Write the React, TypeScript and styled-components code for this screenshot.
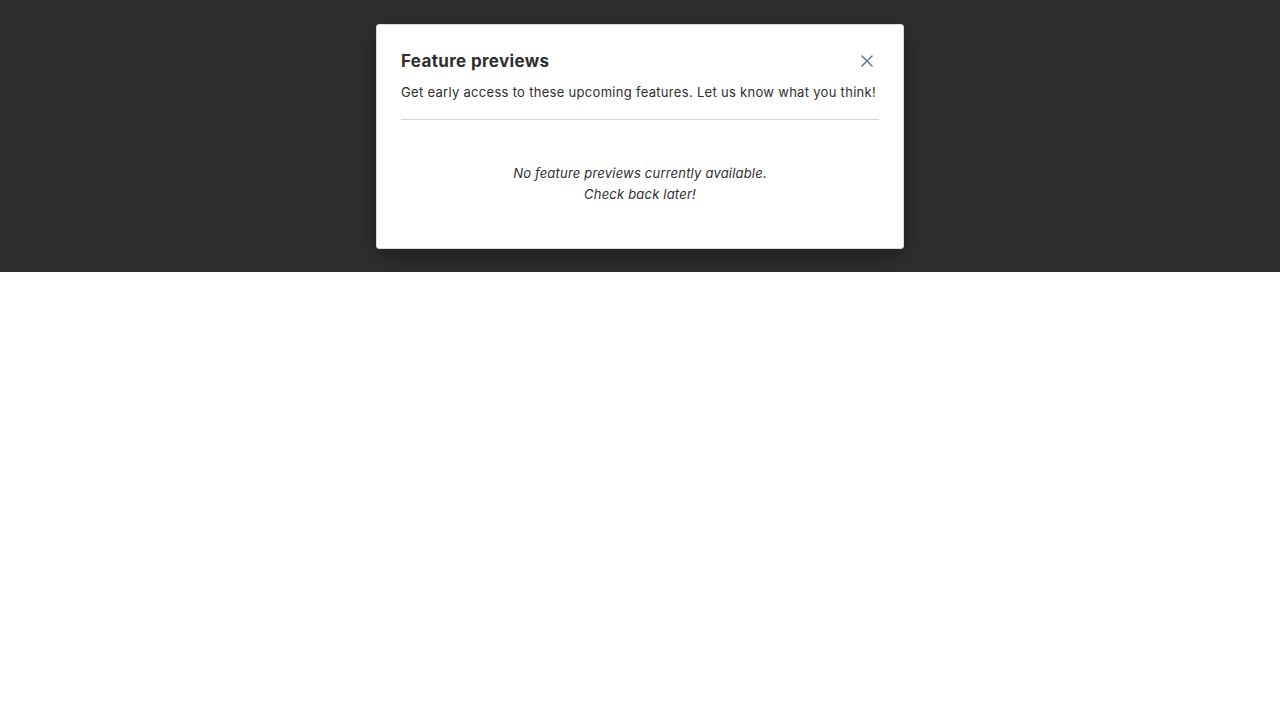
import React, { useState } from 'react';
import styled, { createGlobalStyle } from 'styled-components';

const GlobalStyle = createGlobalStyle`
  * { box-sizing: border-box; }
  body {
    margin: 0;
    background: #ffffff;
    font-family: Inter, "Noto Sans", "Liberation Sans", sans-serif;
    color: #2e2e2e;
  }
`;

const Backdrop = styled.div`
  height: 272px;
  background-color: #2e2e2e;
  display: flex;
  justify-content: center;
  align-items: flex-start;
  padding-top: 24px;
`;

const Modal = styled.div`
  width: 528px;
  background-color: #ffffff;
  border: 1px solid #d9d9d9;
  border-radius: 3px;
  box-shadow: 0 8px 24px rgba(0, 0, 0, 0.35);
  padding: 24px;
`;

const Header = styled.div`
  display: flex;
  justify-content: space-between;
  align-items: center;
  height: 24px;
`;

const Title = styled.h2`
  margin: 0;
  font-size: 17px;
  line-height: 24px;
  font-weight: 700;
  color: #2e2e2e;
  letter-spacing: 0.35px;
`;

const CloseButton = styled.button`
  width: 24px;
  height: 24px;
  border: none;
  background: transparent;
  padding: 0;
  display: flex;
  align-items: center;
  justify-content: center;
  cursor: pointer;
  color: #6b7799;
`;

const Subtitle = styled.p`
  margin: 10px 0 0;
  font-size: 13px;
  line-height: 18px;
  letter-spacing: 0.3px;
  color: #2e2e2e;
`;

const Divider = styled.hr`
  margin: 18px 0 0;
  border: none;
  border-top: 1px solid #d6d6d6;
`;

const EmptyState = styled.div`
  padding: 43px 0 19px;
  text-align: center;
  font-style: italic;
  font-size: 13px;
  line-height: 21px;
  letter-spacing: 0.2px;
  color: #2e2e2e;
`;

const App: React.FC = () => {
  const [open, setOpen] = useState(true);

  return (
    <>
      <GlobalStyle />
      <Backdrop>
        {open && (
          <Modal>
            <Header>
              <Title>Feature previews</Title>
              <CloseButton aria-label="Close" onClick={() => setOpen(false)}>
                <svg width="12" height="12" viewBox="0 0 12 12" fill="none">
                  <path d="M1 1L11 11M11 1L1 11" stroke="currentColor" strokeWidth="1.6" strokeLinecap="round" />
                </svg>
              </CloseButton>
            </Header>
            <Subtitle>
              Get early access to these upcoming features. Let us know what you think!
            </Subtitle>
            <Divider />
            <EmptyState>
              No feature previews currently available.
              <br />
              Check back later!
            </EmptyState>
          </Modal>
        )}
      </Backdrop>
    </>
  );
};

export default App;
